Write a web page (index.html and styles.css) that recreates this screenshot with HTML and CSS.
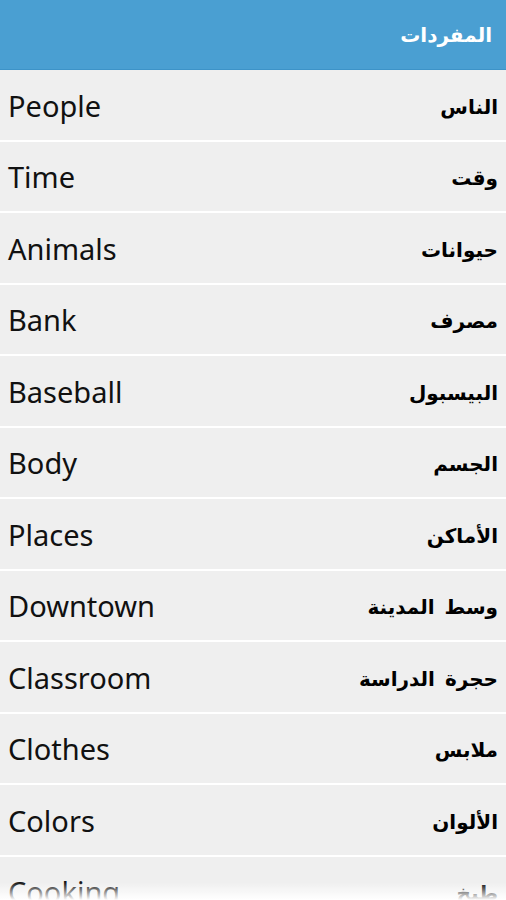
FILE: index.html
```html
<!DOCTYPE html>
<html lang="ar">
<head>
    <meta charset="UTF-8">
    <title>المفردات</title>
    <link rel="stylesheet" href="styles.css">
</head>
<body>
    <div class="topbar" dir="rtl">
        <h1>المفردات</h1>
    </div>

    <ul class="topics">
        <li><span class="en">People</span><span class="ar">الناس</span></li>
        <li><span class="en">Time</span><span class="ar">وقت</span></li>
        <li><span class="en">Animals</span><span class="ar">حيوانات</span></li>
        <li><span class="en">Bank</span><span class="ar">مصرف</span></li>
        <li><span class="en">Baseball</span><span class="ar">البيسبول</span></li>
        <li><span class="en">Body</span><span class="ar">الجسم</span></li>
        <li><span class="en">Places</span><span class="ar">الأماكن</span></li>
        <li><span class="en">Downtown</span><span class="ar">وسط المدينة</span></li>
        <li><span class="en">Classroom</span><span class="ar">حجرة الدراسة</span></li>
        <li><span class="en">Clothes</span><span class="ar">ملابس</span></li>
        <li><span class="en">Colors</span><span class="ar">الألوان</span></li>
        <li><span class="en">Cooking</span><span class="ar">طبخ</span></li>
    </ul>

    <div class="fade"></div>
</body>
</html>
```

FILE: styles.css
```css
body { margin: 0; background-color: #efefef; font-family: "Noto Sans", "DejaVu Sans", sans-serif; overflow: hidden; }

.topbar {
    height: 69px; background-color: #4a9fd2; border-bottom: 1px solid #3d93c8;
    display: flex; align-items: center; padding: 0 14px;
}
.topbar h1 {
    margin: 0; color: #fff; font-size: 20px; font-weight: bold;
    font-family: "DejaVu Sans", sans-serif;
}

.topics { list-style: none; margin: 0; padding: 0; }
.topics li {
    height: 69.5px; border-bottom: 2px solid #fff;
    display: flex; align-items: center; justify-content: space-between;
    padding: 0 8px;
}
.topics .en { font-size: 29px; color: #111; margin-top: 1px; }
.topics .ar {
    direction: rtl; font-family: "DejaVu Sans", sans-serif;
    font-size: 20px; font-weight: bold; color: #000; word-spacing: 3px;
    margin-top: 4px;
}

.fade {
    position: fixed; left: 0; right: 0; bottom: 0; height: 18px;
    background: linear-gradient(to bottom, rgba(255,255,255,0), #fff);
}
```
